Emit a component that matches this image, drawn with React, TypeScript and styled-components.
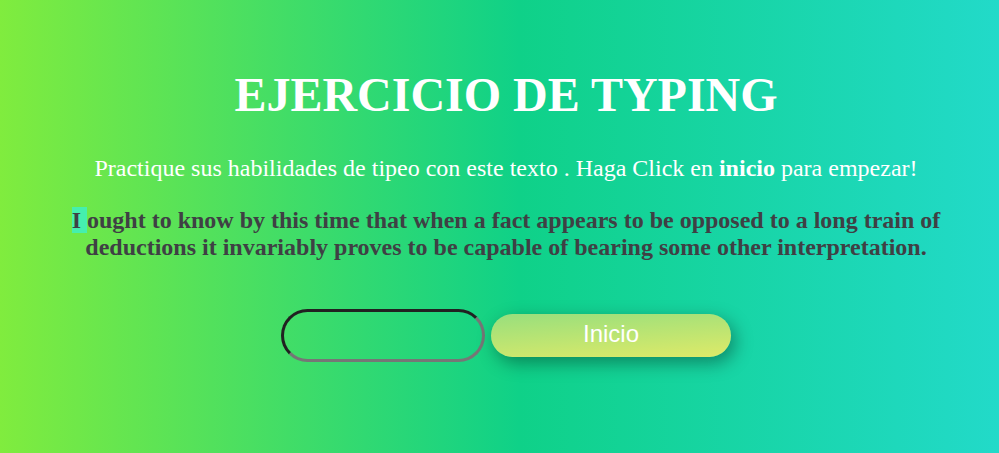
import React, { useRef, useState } from "react";
import styled, { createGlobalStyle } from "styled-components";

const GlobalStyle = createGlobalStyle`
  body {
    margin: 0;
  }
`;

const Page = styled.main`
  box-sizing: border-box;
  min-height: 100vh;
  padding: 65px 56px 64px 69px;
  background: linear-gradient(to right, #80ec3e 0%, #0fd188 52%, #22dac9 100%);
  color: #fff;
  font-family: "Liberation Serif", "Times New Roman", serif;
  font-size: 24px;
  line-height: 27px;
  text-align: center;
`;

const Title = styled.h1`
  margin: 0 0 30px;
  font-size: 48px;
  line-height: 60px;
`;

const Intro = styled.p`
  margin: 0 0 25px;
`;

const Passage = styled.p`
  margin: 0 0 48px;
  color: #3f4044;
  font-weight: bold;
`;

const Current = styled.span`
  background: #45efae;
`;

const Controls = styled.form`
  display: flex;
  justify-content: center;
  align-items: center;
  gap: 6px;
`;

const TypingInput = styled.input`
  box-sizing: border-box;
  width: 204px;
  height: 53px;
  padding: 0 20px;
  border: 3px inset #767676;
  border-radius: 27px;
  background: transparent;
  font: 24px "Liberation Sans", Arial, sans-serif;
  outline: none;
`;

const StartButton = styled.button`
  width: 240px;
  height: 43px;
  padding: 0 0 4px;
  border: 0;
  border-radius: 22px;
  background: linear-gradient(176deg, #98df7d, #deea68);
  box-shadow: 4px 6px 18px rgba(0, 0, 0, 0.36);
  color: #fff;
  font: 24px "Liberation Sans", Arial, sans-serif;
  cursor: pointer;
`;

const PASSAGE =
  "I ought to know by this time that when a fact appears to be opposed to a long train of deductions it invariably proves to be capable of bearing some other interpretation.";

export default function App() {
  const [typed, setTyped] = useState("");
  const field = useRef<HTMLInputElement>(null);
  const words = PASSAGE.split(" ");
  const current = Math.min(typed.split(" ").length - 1, words.length - 1);
  const before = words.slice(0, current).map((word) => word + " ").join("");

  const start = (event: React.FormEvent) => {
    event.preventDefault();
    setTyped("");
    field.current?.focus();
  };

  return (
    <>
      <GlobalStyle />
      <Page>
        <Title>EJERCICIO DE TYPING</Title>
        <Intro>
          Practique sus habilidades de tipeo con este texto . Haga Click en <strong>inicio</strong> para empezar!
        </Intro>
        <Passage>
          {before}
          <Current>{words[current]} </Current>
          {words.slice(current + 1).join(" ")}
        </Passage>
        <Controls onSubmit={start}>
          <TypingInput
            ref={field}
            type="text"
            aria-label="Texto"
            value={typed}
            onChange={(event) => setTyped(event.target.value)}
          />
          <StartButton type="submit">Inicio</StartButton>
        </Controls>
      </Page>
    </>
  );
}
